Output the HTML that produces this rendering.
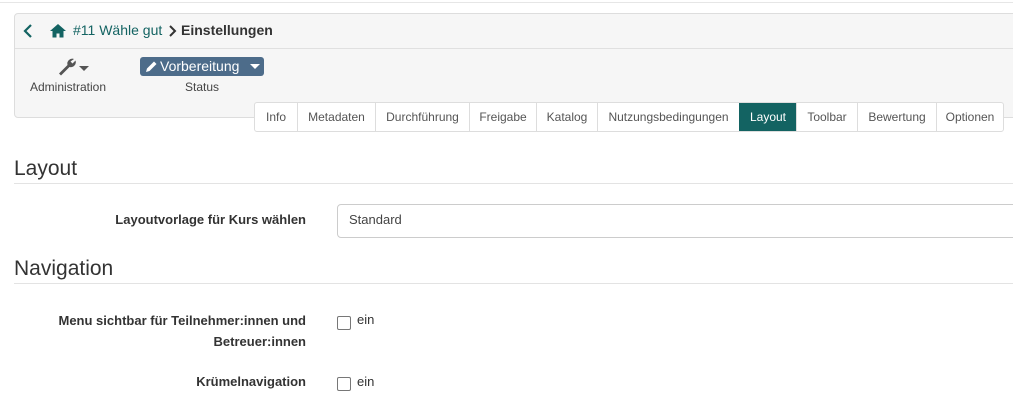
<!DOCTYPE html>
<html><head><meta charset="utf-8"><style>
*{box-sizing:border-box;margin:0;padding:0}
body{width:1013px;height:409px;overflow:hidden;background:#fff;font-family:"Liberation Sans",sans-serif;color:#333;position:relative}
.a{position:absolute;white-space:nowrap}
.topline{position:absolute;left:0;top:2px;width:1013px;height:1px;background:#e6e6e6}
.panel{position:absolute;left:14px;top:13px;width:1010px;height:105px;background:#f6f6f6;border:1px solid #ddd;border-radius:4px}
.bcline{position:absolute;left:15px;top:48px;width:998px;height:1px;background:#e0e0e0}
.tabs{position:absolute;left:254px;top:102px;height:30px;display:flex;border:1px solid #ddd;border-radius:3px;background:#fff;overflow:hidden}
.tabs div{height:28px;line-height:28px;font-size:12px;color:#555;border-left:1px solid #ddd;text-align:center;transform-origin:left}
.tabs div:first-child{border-left:none}
.tabs .on{background:#136362;color:#fff;border-color:#136362}
h2{position:absolute;left:14px;font-size:21px;font-weight:normal;color:#333}
.hr{position:absolute;left:14px;width:999px;height:1px;background:#e3e3e3}
.lbl{position:absolute;right:707px;font-size:13px;font-weight:bold;color:#333;text-align:right;line-height:21px}
.cb{position:absolute;left:337px;width:14px;height:14px;border:1px solid #777;border-radius:2px;background:#fff}
</style></head><body>
<div class="topline"></div>
<div class="panel"></div>
<div class="bcline"></div>
<svg class="a" style="left:23px;top:24px" width="10" height="14" viewBox="0 0 10 14"><path d="M8 1L2 7l6 6" stroke="#136362" stroke-width="2.2" fill="none"/></svg>
<svg class="a" style="left:49px;top:23px" width="18" height="15" viewBox="0 0 18 15"><path d="M9 1L1 8h2.5v6.5h4v-4h3v4h4V8H17z" fill="#136362"/></svg>
<div class="a" style="left:73px;top:22px;font-size:14px;color:#136362">#11 Wähle gut</div>
<svg class="a" style="left:168px;top:25px" width="9" height="12" viewBox="0 0 9 12"><path d="M2 1l5 5-5 5" stroke="#333" stroke-width="2" fill="none"/></svg>
<div class="a" style="left:181px;top:22px;font-size:14px;font-weight:bold;color:#333">Einstellungen</div>
<svg class="a" style="left:57px;top:57px" width="20" height="19" viewBox="0 0 20 19"><path d="M17 2a5 5 0 0 0-6.5 6L2 16.5 4 18.5l8.5-8.5A5 5 0 0 0 18.5 3.5l-3 3-2-2z" fill="#555"/></svg>
<svg class="a" style="left:79px;top:66px" width="10" height="6"><path d="M0 0h10L5 5z" fill="#555"/></svg>
<div class="a" style="left:30px;top:80px;font-size:12px;color:#444">Administration</div>
<div class="a" style="left:140px;top:57px;width:124px;height:19px;background:#4d6c8a;border-radius:3px"></div>
<svg class="a" style="left:145px;top:60px" width="13" height="13" viewBox="0 0 13 13"><path d="M1 12l1-3.5 7-7 2.5 2.5-7 7z" fill="#fff"/></svg>
<div class="a" style="left:160px;top:58px;font-size:14px;color:#fff">Vorbereitung</div>
<svg class="a" style="left:250px;top:64px" width="10" height="6"><path d="M0 0h10L5 5z" fill="#fff"/></svg>
<div class="a" style="left:185px;top:80px;font-size:12px;color:#444">Status</div>
<div class="tabs">
<div style="width:42px">Info</div><div style="width:78px">Metadaten</div><div style="width:94px">Durchführung</div><div style="width:67px">Freigabe</div><div style="width:61px">Katalog</div><div style="width:142px">Nutzungsbedingungen</div><div class="on" style="width:57px">Layout</div><div style="width:61px">Toolbar</div><div style="width:79px">Bewertung</div><div style="width:67px">Optionen</div>
</div>
<h2 style="top:157px">Layout</h2>
<div class="hr" style="top:183px"></div>
<div class="lbl" style="top:209px">Layoutvorlage für Kurs wählen</div>
<div class="a" style="left:337px;top:204px;width:690px;height:34px;border:1px solid #ccc;border-radius:4px"></div>
<div class="a" style="left:349px;top:212px;font-size:13px;color:#444">Standard</div>
<h2 style="top:257px">Navigation</h2>
<div class="hr" style="top:283px"></div>
<div class="lbl" style="top:310px">Menu sichtbar für Teilnehmer:innen und<br>Betreuer:innen</div>
<div class="cb" style="top:316px"></div>
<div class="a" style="left:357px;top:312px;font-size:13px">ein</div>
<div class="lbl" style="top:371px">Krümelnavigation</div>
<div class="cb" style="top:377px"></div>
<div class="a" style="left:357px;top:374px;font-size:13px">ein</div>
</body></html>
